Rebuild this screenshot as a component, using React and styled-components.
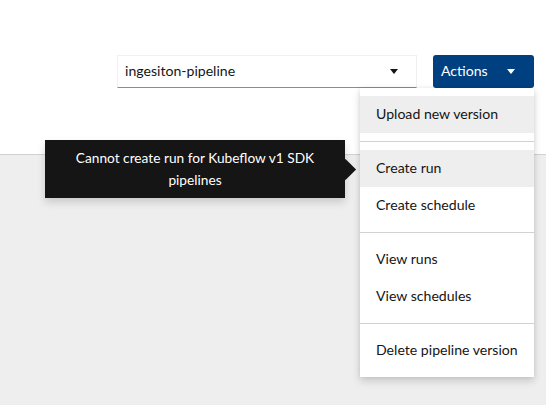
import React from 'react';
import styled, { createGlobalStyle } from 'styled-components';

const Global = createGlobalStyle`
  html, body { margin: 0; padding: 0; background: #eeeeee; }
  body { font-family: Lato, "Open Sans", sans-serif; font-size: 14.1px; color: #151515; }
  * { box-sizing: border-box; }
`;
const Page = styled.div`position: relative; width: 546px; height: 405px; overflow: hidden; display: flex; flex-direction: column;`;
const Header = styled.header`height: 155px; background: #fff; border-bottom: 1px solid #d2d2d2; display: flex; align-items: flex-start; justify-content: flex-end; gap: 16px; padding: 55px 12px 0 0;`;
const Select = styled.div`width: 300px; height: 33px; display: flex; align-items: center; justify-content: space-between; padding: 0 18.5px 2px 7px; border: 1px solid #f0f0f0; border-bottom: 1px solid #8a8d90; background: #fff;`;
const ActionButton = styled.button`width: 101px; height: 33px; display: flex; align-items: center; justify-content: space-between; padding: 0 19px 2px 8px; border: 0; border-radius: 3px; background: #004080; color: #fff; font: inherit;`;
const Caret = styled.span`width: 0; height: 0; margin-top: 2px; border-left: 4px solid transparent; border-right: 4px solid transparent; border-top: 5px solid ${p => p.$color};`;
const Menu = styled.div`position: absolute; left: 360px; top: 88px; width: 174px; padding: 8px 0; background: #fff; box-shadow: 0 4px 8px rgba(3,3,3,.16), 0 0 4px rgba(3,3,3,.08);`;
const Item = styled.div`height: 37px; display: flex; align-items: center; padding: 0 0 2px 16px; background: ${p => p.$active ? '#eeeeee' : 'transparent'}; white-space: nowrap;`;
const Divider = styled.div`height: 1px; margin: 8px 0; background: #d2d2d2;`;
const Tooltip = styled.div`position: absolute; left: 45px; top: 140px; width: 300px; height: 58px; padding: 7px 16px; background: #151515; color: #fff; text-align: center; font-size: 13.7px; line-height: 22px; box-shadow: 0 4px 8px rgba(3,3,3,.16);
  &::after { content: ""; position: absolute; right: -7.5px; top: 21.5px; width: 15px; height: 15px; background: #151515; transform: rotate(45deg); }`;

export default function App() {
  return (
    <Page>
      <Global />
      <Header>
        <Select>ingesiton-pipeline<Caret $color="#151515" /></Select>
        <ActionButton>Actions<Caret $color="#fff" /></ActionButton>
      </Header>
      <Menu>
        <Item $active>Upload new version</Item>
        <Divider />
        <Item $active>Create run</Item>
        <Item>Create schedule</Item>
        <Divider />
        <Item>View runs</Item>
        <Item>View schedules</Item>
        <Divider />
        <Item>Delete pipeline version</Item>
      </Menu>
      <Tooltip>Cannot create run for Kubeflow v1 SDK pipelines</Tooltip>
    </Page>
  );
}
